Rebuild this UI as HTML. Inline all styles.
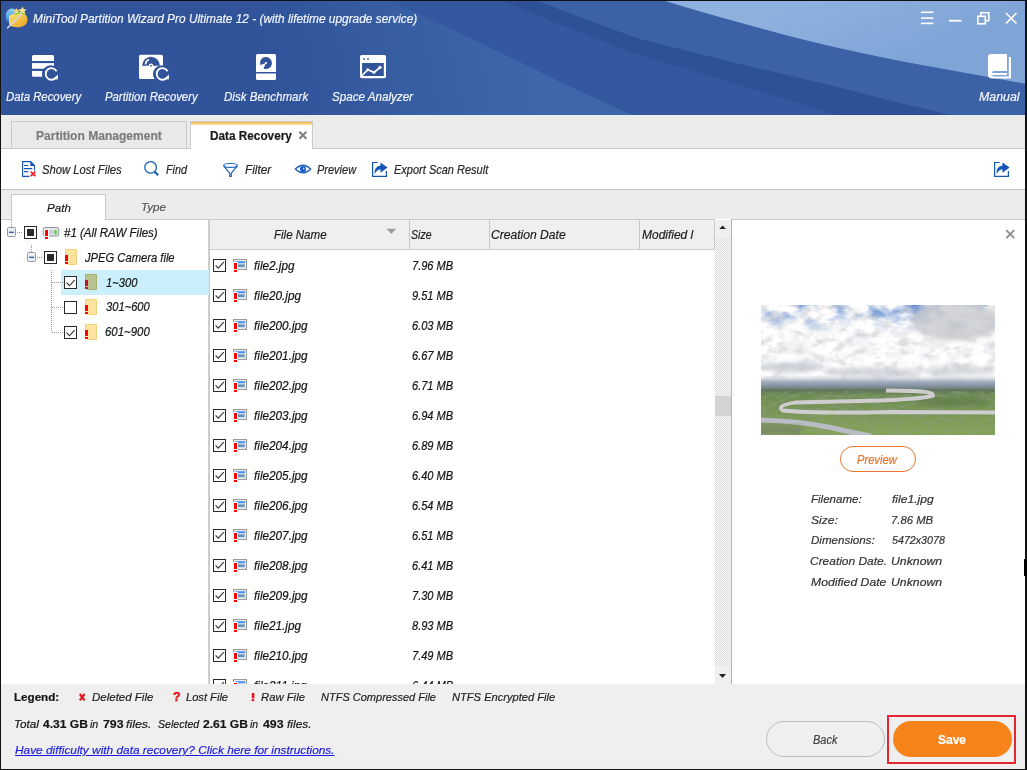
<!DOCTYPE html>
<html><head><meta charset="utf-8">
<style>
*{box-sizing:border-box;margin:0;padding:0}
html,body{width:1027px;height:770px;overflow:hidden;background:#f0f0f0}
body{font-family:"Liberation Sans",sans-serif;font-size:12px;color:#222;position:relative}
.abs{position:absolute}
.it{font-style:italic}
.w{color:#fff}
.hdr{left:0;top:0;width:1027px;height:115px}
.lbl{position:absolute;top:89px;font-style:italic;font-size:12.5px;color:#f4f6fb;white-space:nowrap}
.tb{position:absolute;top:162px;font-style:italic;font-size:12px;color:#333;white-space:nowrap}
.row{position:absolute;left:210px;width:505px;height:30px}
.cb{position:absolute;width:13px;height:13px;border:1px solid #333;background:#fff}
.txt{position:absolute;font-style:italic;white-space:nowrap;color:#222}
.t{position:absolute;white-space:nowrap;line-height:1;transform-origin:0 0;font-family:"Liberation Sans",sans-serif;-webkit-text-stroke:0.2px currentColor}
</style></head>
<body>
<!-- header -->
<svg class="abs hdr" width="1027" height="115" viewBox="0 0 1027 115">
 <defs>
  <linearGradient id="lg" gradientUnits="userSpaceOnUse" x1="800" y1="0" x2="840" y2="90">
   <stop offset="0" stop-color="#8eb1de"/><stop offset="1" stop-color="#7fa5d7"/>
  </linearGradient>
  <linearGradient id="ga" gradientUnits="userSpaceOnUse" x1="270" y1="70" x2="520" y2="20">
   <stop offset="0" stop-color="#30539a"/><stop offset="1" stop-color="#3e67ab"/>
  </linearGradient>
 </defs>
 <rect width="1027" height="115" fill="url(#ga)"/>
 <path d="M389 0 Q480 42 560 82 L632 115 L1027 115 L1027 0 Z" fill="#3358a0"/>
 <path d="M501 0 Q570 30 640 55 Q690 70 740 85 L837 115 L1027 115 L1027 0 Z" fill="#2e5096"/>
 <path d="M536 0 Q590 22 640 39 Q690 52 740 64 Q820 82 900 103 L950 115 L1027 115 L1027 0 Z" fill="#3b61a6"/>
 <path d="M662 0 Q700 12 767 30 Q820 45 900 61 Q960 72 1027 84 L1027 0 Z" fill="url(#lg)"/>
 <rect x="0" y="0" width="1027" height="1" fill="#111"/>
 <rect x="0" y="0" width="1" height="115" fill="#111"/>
 <rect x="1025" y="0" width="2" height="115" fill="#111"/>
</svg>
<!-- logo -->
<svg class="abs" style="left:2px;top:4px" width="30" height="28" viewBox="2 4 30 28">
 <defs>
  <linearGradient id="lgb" x1="0" y1="0" x2="0" y2="1"><stop offset="0" stop-color="#8fd0f2"/><stop offset="1" stop-color="#2a86dc"/></linearGradient>
  <linearGradient id="lgy" x1="0" y1="0" x2="1" y2="1"><stop offset="0" stop-color="#fde27a"/><stop offset="1" stop-color="#eaa21a"/></linearGradient>
 </defs>
 <ellipse cx="12.2" cy="15.8" rx="6.6" ry="7.2" fill="url(#lgb)"/>
 <path d="M9 16 Q14 12.5 22 12.5 Q27.5 14 27.5 20 Q27 26.5 19 27.2 Q11 27.5 9 24Z" fill="url(#lgy)"/>
 <path d="M15 14 Q19 12 25 13.5" stroke="#5fd04a" stroke-width="2" fill="none"/>
 <path d="M22.4 6.4 l1.4 2.6 2.8 .4 -2 1.9 .5 2.8 -2.7-1.4 -2.6 1.4 .5-2.8 -2-1.9 2.8-.4z" fill="#f6dc8c"/>
 <path d="M16.5 8 l1.1 2 2.2 .3 -1.6 1.5 .4 2.2 -2.1-1.1 -2.1 1.1 .4-2.2 -1.6-1.5 2.2-.3z" fill="#f3d47e"/>
 <path d="M7.2 28.2 L21.5 14.3" stroke="#d9d9de" stroke-width="1.6"/>
</svg>
<!-- window controls -->
<svg class="abs" style="left:915px;top:8px" width="108" height="22" viewBox="915 8 108 22">
 <g fill="#fff">
  <rect x="921" y="11.5" width="12.5" height="1.6"/>
  <rect x="921" y="17.3" width="12.5" height="1.6"/>
  <rect x="921" y="22.6" width="12.5" height="1.6"/>
  <rect x="949" y="19.8" width="12.5" height="1.8"/>
 </g>
 <g fill="none" stroke="#fff" stroke-width="1.6">
  <rect x="977.8" y="16.3" width="7.5" height="7.5"/>
  <path d="M980.8 16.3 V12.8 H988.8 V20.8 H985.3"/>
  <path d="M1006 13 L1016.5 23.5 M1016.5 13 L1006 23.5"/>
 </g>
</svg>
<!-- toolbar icons -->
<svg class="abs" style="left:0;top:45px" width="1027" height="45" viewBox="0 45 1027 45">
 <defs>
  <mask id="m1"><rect x="0" y="45" width="1027" height="45" fill="#fff"/><circle cx="50.7" cy="74.1" r="8.8" fill="#000"/></mask>
  <mask id="m2"><rect x="0" y="45" width="1027" height="45" fill="#fff"/><circle cx="161.7" cy="74.1" r="8.8" fill="#000"/></mask>
 </defs>
 <g fill="#fff">
  <g mask="url(#m1)">
   <path d="M33.5 55 H52.5 Q54 55 54 56.5 V61 H32 V56.5 Q32 55 33.5 55Z"/>
   <rect x="32" y="63.1" width="22" height="5.6"/>
   <path d="M32 71 H43 V76.8 H33.5 Q32 76.8 32 75.3Z"/>
  </g>
  <g mask="url(#m2)">
   <rect x="139" y="54.8" width="24" height="24.3" rx="1.6"/>
  </g>
  <path d="M257.5 54 H274.5 Q276 54 276 55.5 V72 H256 V55.5 Q256 54 257.5 54Z"/>
  <path d="M256 73.5 H276 V78.5 Q276 80 274.5 80 H257.5 Q256 80 256 78.5Z"/>
  <rect x="360" y="55" width="26" height="23.2" rx="1.6"/>
  <path d="M990.5 54 H1007 V71 H994 Q992 71 992 73 V74.5 Q992 76.6 994 76.6 H1011 V78.6 H992 Q988 78.6 988 74.6 V56.5 Q988 54 990.5 54Z"/>
  <rect x="1008.8" y="57" width="2.2" height="21"/>
  <rect x="992" y="73" width="15" height="2"/>
 </g>
 <!-- partition disk -->
 <path d="M142.1 65.7 A8.9 8.9 0 0 1 159.9 65.7 Z" fill="#30539a"/>
 <path d="M145.5 64.3 A5.8 5.8 0 0 1 149 59.6" stroke="#fff" stroke-width="1.6" fill="none"/>
 <circle cx="151" cy="65.7" r="2.3" fill="#fff"/>
 <circle cx="151" cy="65.7" r="0.9" fill="#30539a"/>
 <!-- refresh arrows -->
 <g fill="none" stroke="#fff" stroke-width="1.9">
  <path d="M56.6 71.2 A5.8 5.8 0 1 0 56.2 77.4"/>
  <path d="M167.6 71.2 A5.8 5.8 0 1 0 167.2 77.4"/>
 </g>
 <path d="M58 74.6 L57.8 79.6 L53.2 78.8Z" fill="#fff"/>
 <path d="M169 74.6 L168.8 79.6 L164.2 78.8Z" fill="#fff"/>
 <!-- disk bench platter -->
 <path d="M266 63 L260.36 65.05 A6 6 0 1 1 263.56 68.48 Z" fill="#30539a"/>
 <rect x="265.1" y="62.1" width="1.8" height="1.8" fill="#fff"/>
 <!-- space analyzer -->
 <rect x="362.1" y="63" width="21.7" height="13" fill="#30539a"/>
 <rect x="363.3" y="58.2" width="1.6" height="1.6" fill="#30539a"/>
 <rect x="367.2" y="58.2" width="1.6" height="1.6" fill="#30539a"/>
 <polyline points="362,75.5 367.8,69.8 374,72.4 380,67.5" fill="none" stroke="#fff" stroke-width="1.7"/>
 <circle cx="367.8" cy="69.6" r="1.4" fill="#fff"/>
 <circle cx="374" cy="72.4" r="1.4" fill="#fff"/>
 <circle cx="380" cy="67.5" r="1.7" fill="#fff"/>
</svg>
<!-- tab bar -->
<div class="abs" style="left:0;top:115px;width:1027px;height:34px;background:#ececec"></div>
<div class="abs" style="left:11px;top:121px;width:176px;height:28px;background:#e9e9e9;border:1px solid #c9c9c9;border-bottom:none"></div>
<div class="abs" style="left:190px;top:121px;width:123px;height:29px;background:#fff;border:1px solid #c9c9c9;border-bottom:none"></div>
<div class="abs" style="left:191px;top:122px;width:121px;height:3px;background:linear-gradient(#f2b84a,#fbe3a6)"></div>
<svg class="abs" style="left:297px;top:129px" width="12" height="12" viewBox="0 0 12 12"><path d="M2.4 2.7 L9.4 9.7 M9.4 2.7 L2.4 9.7" stroke="#808080" stroke-width="2.1"/></svg>
<!-- toolbar -->
<div class="abs" style="left:0;top:148px;width:190px;height:1px;background:#c9c9c9"></div>
<div class="abs" style="left:313px;top:148px;width:714px;height:1px;background:#c9c9c9"></div>
<div class="abs" style="left:0;top:149px;width:1027px;height:40px;background:#fff"></div>
<div class="abs" style="left:191px;top:148px;width:121px;height:2px;background:#fff"></div>
<div class="abs" style="left:0;top:189px;width:1027px;height:1px;background:#c4c4c4"></div>
<svg class="abs" style="left:0;top:155px" width="1027" height="26" viewBox="0 155 1027 26">
 <g fill="none" stroke="#1255b5" stroke-width="1.1">
  <path d="M29.5 176.4 H22.6 V161.6 H30.7 L34.5 165.4 V170.5"/>
  <path d="M24 165.5 H28.2 M24 168.6 H32.2 M24 171.6 H28.2" stroke-width="1.2"/>
 </g>
 <path d="M30.4 161.6 L34.8 166 H30.4Z" fill="#1255b5"/>
 <path d="M30.8 171.6 L35.4 176.2 M35.4 171.6 L30.8 176.2" stroke="#e3202b" stroke-width="1.7"/>
 <circle cx="150.6" cy="167.4" r="5.8" fill="none" stroke="#1d62c0" stroke-width="1.3"/>
 <path d="M154.6 171.6 L158.2 175.2" stroke="#1d62c0" stroke-width="2.2"/>
 <g fill="none" stroke="#1d62c0" stroke-width="1.2">
  <ellipse cx="230.5" cy="165.4" rx="6.8" ry="1.9"/>
  <path d="M223.8 166 L229.7 173.2 V176.3 H231.3 V173.2 L237.2 166"/>
 </g>
 <path d="M295.3 169 Q303 161.5 310.7 169 Q303 176.5 295.3 169Z" fill="none" stroke="#1d62c0" stroke-width="1.2"/>
 <circle cx="303" cy="169" r="3.1" fill="#1d62c0"/>
 <path d="M303.2 167.4 L304.8 168.6 L303.2 169.6Z" fill="#fff"/>
 <path d="M377.6 162.5 H372.6 V176.3 H386.4 V171" fill="none" stroke="#1555b5" stroke-width="1.2"/>
 <path d="M380.5 162.5 L387.6 167.6 L380.5 172.7 V169.3 Q376.5 169.6 374.8 174.3 Q373.4 166.8 380.5 165.4 Z" fill="#1555b5"/>
 <path d="M999.6 162.5 H994.6 V176.3 H1008.4 V171" fill="none" stroke="#1555b5" stroke-width="1.2"/>
 <path d="M1002.5 162.5 L1009.6 167.6 L1002.5 172.7 V169.3 Q998.5 169.6 996.8 174.3 Q995.4 166.8 1002.5 165.4 Z" fill="#1555b5"/>
</svg>
<!-- path/type tabs area -->
<div class="abs" style="left:0;top:190px;width:1027px;height:30px;background:#ececec"></div>
<div class="abs" style="left:11px;top:194px;width:95px;height:27px;background:#fff;border:1px solid #c9c9c9;border-bottom:none"></div>
<div class="abs" style="left:0;top:219px;width:11px;height:1px;background:#c9c9c9"></div>
<div class="abs" style="left:106px;top:219px;width:104px;height:1px;background:#c9c9c9"></div>
<!-- tree panel -->
<div class="abs" style="left:0;top:220px;width:209px;height:464px;background:#fff"></div>
<div class="abs" style="left:208px;top:219px;width:1px;height:465px;background:#d0d0d0"></div>
<div class="abs" style="left:61px;top:270px;width:148px;height:25px;background:#ccf0fb"></div>
<svg class="abs" style="left:0;top:220px" width="209" height="130" viewBox="0 220 209 130">
 <g stroke="#9a9a9a" stroke-width="1" stroke-dasharray="1 1" fill="none">
  <path d="M11.5 200 V227"/>
  <path d="M17 232.5 H22"/>
  <path d="M31.5 245 V252"/>
  <path d="M37 257.5 H42"/>
  <path d="M51.5 270 V332.5"/>
  <path d="M52 282.5 H63 M52 307.5 H63 M52 332.5 H63"/>
 </g>
 <rect x="7.5" y="227.5" width="8" height="9" rx="1" fill="#eef0f3" stroke="#8d9ab0"/>
 <rect x="9" y="231.6" width="5" height="1.4" fill="#3a64b8"/>
 <rect x="27.5" y="252.5" width="8" height="9" rx="1" fill="#eef0f3" stroke="#8d9ab0"/>
 <rect x="29" y="256.6" width="5" height="1.4" fill="#3a64b8"/>
 <rect x="24.5" y="226.5" width="12" height="12" fill="#fff" stroke="#2a2a2a"/>
 <rect x="27" y="229" width="7" height="7" fill="#2a2a2a"/>
 <rect x="44.5" y="251.5" width="12" height="12" fill="#fff" stroke="#2a2a2a"/>
 <rect x="47" y="254" width="7" height="7" fill="#2a2a2a"/>
 <rect x="64.5" y="276.5" width="12" height="12" fill="#fff" stroke="#2a2a2a"/>
 <path d="M66.6 282.6 L69.4 285.8 L74.6 280.2" fill="none" stroke="#2a2a2a" stroke-width="1.1"/>
 <rect x="64.5" y="301.5" width="12" height="12" fill="#fff" stroke="#2a2a2a"/>
 <rect x="64.5" y="326.5" width="12" height="12" fill="#fff" stroke="#2a2a2a"/>
 <path d="M66.6 332.6 L69.4 335.8 L74.6 330.2" fill="none" stroke="#2a2a2a" stroke-width="1.1"/>
 <!-- drive -->
 <rect x="43.2" y="227.5" width="15.6" height="8.5" rx="2" fill="#e4e6ea" stroke="#8c929c"/>
 <rect x="48" y="230" width="6" height="4" fill="#c8d0dc"/>
 <rect x="54.5" y="230" width="2.2" height="4.5" fill="#4cd23c"/>
 <rect x="44" y="229" width="5" height="11" fill="#fff"/><rect x="45" y="230" width="3" height="6" fill="#f00"/><rect x="45" y="237" width="3" height="2" fill="#f00"/>
 <!-- folders -->
 <path d="M65.5 249.5 H76.5 V264.5 H67.5 V262.5 H65.5Z" fill="#fde3a0" stroke="#f2d27c"/>
 <rect x="65" y="255" width="3" height="6" fill="#f00"/><rect x="65" y="262" width="3" height="2" fill="#f00"/>
 <path d="M85.5 274.5 H96.5 V289.5 H87.5 V287.5 H85.5Z" fill="#b9c391" stroke="#a7b071"/>
 <rect x="85" y="280" width="3" height="6" fill="#c8102e"/><rect x="85" y="287" width="3" height="2" fill="#c8102e"/>
 <path d="M85.5 299.5 H96.5 V314.5 H87.5 V312.5 H85.5Z" fill="#fde3a0" stroke="#f2d27c"/>
 <rect x="85" y="305" width="3" height="6" fill="#f00"/><rect x="85" y="312" width="3" height="2" fill="#f00"/>
 <path d="M85.5 324.5 H96.5 V339.5 H87.5 V337.5 H85.5Z" fill="#fde3a0" stroke="#f2d27c"/>
 <rect x="85" y="330" width="3" height="6" fill="#f00"/><rect x="85" y="337" width="3" height="2" fill="#f00"/>
</svg>
<!-- file list -->
<div class="abs" style="left:209px;top:219px;width:523px;height:465px;background:#fff"></div>
<div class="abs" style="left:209px;top:219px;width:1px;height:465px;background:#c9c9c9"></div>
<div class="abs" style="left:210px;top:219px;width:505px;height:31px;background:#efefef;border-top:1px solid #c9c9c9;border-bottom:1px solid #c9c9c9"></div>
<div class="abs" style="left:409px;top:220px;width:1px;height:29px;background:#c9c9c9"></div>
<div class="abs" style="left:489px;top:220px;width:1px;height:29px;background:#c9c9c9"></div>
<div class="abs" style="left:639px;top:220px;width:1px;height:29px;background:#c9c9c9"></div>
<div class="abs" style="left:714px;top:220px;width:1px;height:29px;background:#c9c9c9"></div>
<svg class="abs" style="left:386px;top:228px" width="11" height="7" viewBox="0 0 11 7"><path d="M0.5 0.8 H10.2 L5.35 6Z" fill="#9c9c9c"/></svg>
<!-- scrollbar -->
<div class="abs" style="left:715px;top:220px;width:16px;height:464px;background:repeating-conic-gradient(#d9d9d9 0 25%,#fcfcfc 0 50%) 0 0/2px 2px"></div>
<div class="abs" style="left:715px;top:220px;width:16px;height:18px;background:#efefef"></div>
<div class="abs" style="left:715px;top:666px;width:16px;height:18px;background:#efefef"></div>
<div class="abs" style="left:715px;top:396px;width:16px;height:20px;background:#d3d3d3"></div>
<div class="abs" style="left:731px;top:219px;width:1px;height:465px;background:#b4b4b4"></div>
<svg class="abs" style="left:715px;top:220px" width="16" height="464" viewBox="0 0 16 464"><path d="M4.2 9 H11 L7.6 5.6Z" fill="#222"/><path d="M4 454 H11 L7.5 458Z" fill="#222"/></svg>
<!-- preview panel -->
<div class="abs" style="left:732px;top:219px;width:293px;height:465px;background:#fff;border-top:1px solid #c9c9c9"></div>
<svg class="abs" style="left:1003px;top:227px" width="14" height="14" viewBox="1003 227 14 14"><path d="M1006.3 230.2 L1014.2 238.1 M1014.2 230.2 L1006.3 238.1" stroke="#8c8c8c" stroke-width="1.8"/></svg>
<svg class="abs" style="left:761px;top:305px" width="234" height="130" viewBox="0 0 234 130">
 <defs>
  <linearGradient id="grd" x1="0" y1="0" x2="0" y2="1"><stop offset="0" stop-color="#6e8c52"/><stop offset="1" stop-color="#86a457"/></linearGradient>
  <linearGradient id="skyfade" x1="0" y1="0" x2="0" y2="1"><stop offset="0" stop-color="#000"/><stop offset="0.35" stop-color="#fff"/><stop offset="1" stop-color="#fff"/></linearGradient>
  <filter id="cl" x="0" y="0" width="234" height="78" filterUnits="userSpaceOnUse">
   <feTurbulence type="fractalNoise" baseFrequency="0.035 0.06" numOctaves="4" seed="7" result="n"/>
   <feColorMatrix in="n" type="matrix" values="0 0 0 0 1  0 0 0 0 1  0 0 0 0 1  4 0 0 0 -1.3"/>
  </filter>
  <filter id="sh" x="0" y="0" width="234" height="76" filterUnits="userSpaceOnUse">
   <feTurbulence type="fractalNoise" baseFrequency="0.08 0.12" numOctaves="3" seed="11" result="n"/>
   <feColorMatrix in="n" type="matrix" values="0 0 0 0 0.55  0 0 0 0 0.56  0 0 0 0 0.6  3 0 0 0 -1.35"/>
  </filter>
  <filter id="bl" x="-20%" y="-20%" width="140%" height="140%"><feGaussianBlur stdDeviation="2.2"/></filter>
  <filter id="bl2" x="-5%" y="-50%" width="110%" height="200%"><feGaussianBlur stdDeviation="0.7"/></filter>
  <mask id="skm"><rect width="234" height="80" fill="url(#skyfade)"/></mask>
  <clipPath id="pc"><rect width="234" height="130"/></clipPath>
 </defs>
 <g clip-path="url(#pc)">
 <rect width="234" height="80" fill="#5b86cf"/>
 <rect width="234" height="80" fill="#f2f3f5" mask="url(#skm)"/>
 <rect width="234" height="80" filter="url(#cl)"/>
 <g filter="url(#bl)">
  <ellipse cx="195" cy="16" rx="45" ry="20" fill="#c9cacd" opacity="0.8"/>
  <ellipse cx="30" cy="62" rx="32" ry="5" fill="#cfd3da"/>
  <ellipse cx="110" cy="67" rx="46" ry="5" fill="#d5d8de"/>
  <ellipse cx="196" cy="66" rx="36" ry="5" fill="#d9dce1"/>
 </g>
 <rect width="234" height="78" filter="url(#sh)" opacity="0.55"/>
 <defs>
  <linearGradient id="hz" x1="0" y1="0" x2="0" y2="1"><stop offset="0" stop-color="#d0d4dc" stop-opacity="0"/><stop offset="0.33" stop-color="#a3aec0"/><stop offset="0.55" stop-color="#8592a0"/><stop offset="0.78" stop-color="#5f7359"/><stop offset="1" stop-color="#6d8b51"/></linearGradient>
  <filter id="gn" x="0" y="86" width="234" height="44" filterUnits="userSpaceOnUse">
   <feTurbulence type="fractalNoise" baseFrequency="0.12 0.3" numOctaves="3" seed="5" result="n"/>
   <feColorMatrix in="n" type="matrix" values="0 0 0 0 0.25  0 0 0 0 0.33  0 0 0 0 0.2  3 0 0 0 -1.2"/>
  </filter>
 </defs>
 <rect x="0" y="70" width="234" height="20" fill="url(#hz)"/>
 <rect x="0" y="90" width="234" height="40" fill="url(#grd)"/>
 <rect x="0" y="84" width="234" height="46" filter="url(#gn)" opacity="0.6"/>
 <ellipse cx="190" cy="97" rx="40" ry="4" fill="#5c7446" opacity="0.6" filter="url(#bl)"/>
 <g fill="none" filter="url(#bl2)">
  <path d="M236 107.5 L130 107 Q50 108.5 22 105.5 Q14 101 34 97.5 L120 95.5 Q166 93.5 172 90.5 Q173 86.5 150 86 L125 85.5" stroke="#cfcdd0" stroke-width="3.8"/>
  <path d="M-2 115 Q40 116 72 123 Q92 128 110 131" stroke="#b8bcc4" stroke-width="5"/>
 </g>
 <rect x="0" y="120" width="40" height="10" fill="#6d7a66" opacity="0.5" filter="url(#bl)"/>
 </g>
</svg>

<div class="abs" style="left:840px;top:446px;width:76px;height:26px;border:1px solid #e8762c;border-radius:13px"></div>
<!-- bottom -->
<div class="abs" style="left:0;top:684px;width:1027px;height:86px;background:#efefef"></div>
<svg class="abs" style="left:0;top:684px" width="300" height="30" viewBox="0 684 300 30">
 <path d="M79.8 694 L84.6 700.4 M84.6 694 L79.8 700.4" stroke="#e5141e" stroke-width="2.1"/>
 <text x="172.9" y="701.3" font-family="Liberation Sans" font-weight="bold" font-size="12.5" fill="#e5141e" stroke="#e5141e" stroke-width="0.5">?</text>
 <rect x="251.8" y="693" width="2.6" height="5.4" fill="#e5141e"/><rect x="251.6" y="699.2" width="2.6" height="2" fill="#e5141e"/>
</svg>
<div class="abs" style="left:766px;top:721px;width:119px;height:36px;border:1px solid #bdbdbd;border-radius:18px;background:#efefef"></div>
<div class="abs" style="left:893px;top:721px;width:119px;height:36px;border-radius:18px;background:#f7841b"></div>
<div class="abs" style="left:887px;top:715px;width:129px;height:49px;border:2px solid #e42731"></div>
<div class="abs" style="left:1024px;top:559px;width:3px;height:17px;background:#000;z-index:51"></div>

<div class="abs" style="left:210px;top:250px;width:505px;height:434px;overflow:hidden">
<div class="t" style="left:43.90px;top:10.00px;font-size:12.35px;font-style:italic;color:#121212;transform:scaleX(0.952);">file2.jpg</div>
<div class="t" style="left:202.30px;top:10.00px;font-size:12.35px;font-style:italic;color:#121212;transform:scaleX(0.896);">7.96 MB</div>
<svg class="abs" style="left:3px;top:9px" width="34" height="15" viewBox="213 259 34 15"><rect x="213.5" y="259.5" width="12" height="12" fill="#fff" stroke="#2a2a2a"/><path d="M215.6 265.4 L218.2 268.2 L223.8 262.2" fill="none" stroke="#333" stroke-width="1.1"/><rect x="233.6" y="259.6" width="12.8" height="9.8" fill="#fff" stroke="#9a9a9a" stroke-width="1.2"/><rect x="235.5" y="261.2" width="9.5" height="1.8" fill="#4a8ff0"/><rect x="235.5" y="263" width="9.5" height="4.6" fill="#bcd6ef"/><rect x="237.5" y="264.5" width="7" height="2.6" fill="#6b93b3"/><rect x="233" y="262" width="5" height="11" fill="#fff"/><rect x="234" y="263" width="3" height="6" fill="#f00"/><rect x="234" y="270" width="3" height="2" fill="#f00"/></svg>
<div class="t" style="left:43.90px;top:40.00px;font-size:12.35px;font-style:italic;color:#121212;transform:scaleX(0.952);">file20.jpg</div>
<div class="t" style="left:202.30px;top:40.00px;font-size:12.35px;font-style:italic;color:#121212;transform:scaleX(0.896);">9.51 MB</div>
<svg class="abs" style="left:3px;top:39px" width="34" height="15" viewBox="213 259 34 15"><rect x="213.5" y="259.5" width="12" height="12" fill="#fff" stroke="#2a2a2a"/><path d="M215.6 265.4 L218.2 268.2 L223.8 262.2" fill="none" stroke="#333" stroke-width="1.1"/><rect x="233.6" y="259.6" width="12.8" height="9.8" fill="#fff" stroke="#9a9a9a" stroke-width="1.2"/><rect x="235.5" y="261.2" width="9.5" height="1.8" fill="#4a8ff0"/><rect x="235.5" y="263" width="9.5" height="4.6" fill="#bcd6ef"/><rect x="237.5" y="264.5" width="7" height="2.6" fill="#6b93b3"/><rect x="233" y="262" width="5" height="11" fill="#fff"/><rect x="234" y="263" width="3" height="6" fill="#f00"/><rect x="234" y="270" width="3" height="2" fill="#f00"/></svg>
<div class="t" style="left:43.90px;top:70.00px;font-size:12.35px;font-style:italic;color:#121212;transform:scaleX(0.952);">file200.jpg</div>
<div class="t" style="left:202.30px;top:70.00px;font-size:12.35px;font-style:italic;color:#121212;transform:scaleX(0.896);">6.03 MB</div>
<svg class="abs" style="left:3px;top:69px" width="34" height="15" viewBox="213 259 34 15"><rect x="213.5" y="259.5" width="12" height="12" fill="#fff" stroke="#2a2a2a"/><path d="M215.6 265.4 L218.2 268.2 L223.8 262.2" fill="none" stroke="#333" stroke-width="1.1"/><rect x="233.6" y="259.6" width="12.8" height="9.8" fill="#fff" stroke="#9a9a9a" stroke-width="1.2"/><rect x="235.5" y="261.2" width="9.5" height="1.8" fill="#4a8ff0"/><rect x="235.5" y="263" width="9.5" height="4.6" fill="#bcd6ef"/><rect x="237.5" y="264.5" width="7" height="2.6" fill="#6b93b3"/><rect x="233" y="262" width="5" height="11" fill="#fff"/><rect x="234" y="263" width="3" height="6" fill="#f00"/><rect x="234" y="270" width="3" height="2" fill="#f00"/></svg>
<div class="t" style="left:43.90px;top:100.00px;font-size:12.35px;font-style:italic;color:#121212;transform:scaleX(0.952);">file201.jpg</div>
<div class="t" style="left:202.30px;top:100.00px;font-size:12.35px;font-style:italic;color:#121212;transform:scaleX(0.896);">6.67 MB</div>
<svg class="abs" style="left:3px;top:99px" width="34" height="15" viewBox="213 259 34 15"><rect x="213.5" y="259.5" width="12" height="12" fill="#fff" stroke="#2a2a2a"/><path d="M215.6 265.4 L218.2 268.2 L223.8 262.2" fill="none" stroke="#333" stroke-width="1.1"/><rect x="233.6" y="259.6" width="12.8" height="9.8" fill="#fff" stroke="#9a9a9a" stroke-width="1.2"/><rect x="235.5" y="261.2" width="9.5" height="1.8" fill="#4a8ff0"/><rect x="235.5" y="263" width="9.5" height="4.6" fill="#bcd6ef"/><rect x="237.5" y="264.5" width="7" height="2.6" fill="#6b93b3"/><rect x="233" y="262" width="5" height="11" fill="#fff"/><rect x="234" y="263" width="3" height="6" fill="#f00"/><rect x="234" y="270" width="3" height="2" fill="#f00"/></svg>
<div class="t" style="left:43.90px;top:130.00px;font-size:12.35px;font-style:italic;color:#121212;transform:scaleX(0.952);">file202.jpg</div>
<div class="t" style="left:202.30px;top:130.00px;font-size:12.35px;font-style:italic;color:#121212;transform:scaleX(0.896);">6.71 MB</div>
<svg class="abs" style="left:3px;top:129px" width="34" height="15" viewBox="213 259 34 15"><rect x="213.5" y="259.5" width="12" height="12" fill="#fff" stroke="#2a2a2a"/><path d="M215.6 265.4 L218.2 268.2 L223.8 262.2" fill="none" stroke="#333" stroke-width="1.1"/><rect x="233.6" y="259.6" width="12.8" height="9.8" fill="#fff" stroke="#9a9a9a" stroke-width="1.2"/><rect x="235.5" y="261.2" width="9.5" height="1.8" fill="#4a8ff0"/><rect x="235.5" y="263" width="9.5" height="4.6" fill="#bcd6ef"/><rect x="237.5" y="264.5" width="7" height="2.6" fill="#6b93b3"/><rect x="233" y="262" width="5" height="11" fill="#fff"/><rect x="234" y="263" width="3" height="6" fill="#f00"/><rect x="234" y="270" width="3" height="2" fill="#f00"/></svg>
<div class="t" style="left:43.90px;top:160.00px;font-size:12.35px;font-style:italic;color:#121212;transform:scaleX(0.952);">file203.jpg</div>
<div class="t" style="left:202.30px;top:160.00px;font-size:12.35px;font-style:italic;color:#121212;transform:scaleX(0.896);">6.94 MB</div>
<svg class="abs" style="left:3px;top:159px" width="34" height="15" viewBox="213 259 34 15"><rect x="213.5" y="259.5" width="12" height="12" fill="#fff" stroke="#2a2a2a"/><path d="M215.6 265.4 L218.2 268.2 L223.8 262.2" fill="none" stroke="#333" stroke-width="1.1"/><rect x="233.6" y="259.6" width="12.8" height="9.8" fill="#fff" stroke="#9a9a9a" stroke-width="1.2"/><rect x="235.5" y="261.2" width="9.5" height="1.8" fill="#4a8ff0"/><rect x="235.5" y="263" width="9.5" height="4.6" fill="#bcd6ef"/><rect x="237.5" y="264.5" width="7" height="2.6" fill="#6b93b3"/><rect x="233" y="262" width="5" height="11" fill="#fff"/><rect x="234" y="263" width="3" height="6" fill="#f00"/><rect x="234" y="270" width="3" height="2" fill="#f00"/></svg>
<div class="t" style="left:43.90px;top:190.00px;font-size:12.35px;font-style:italic;color:#121212;transform:scaleX(0.952);">file204.jpg</div>
<div class="t" style="left:202.30px;top:190.00px;font-size:12.35px;font-style:italic;color:#121212;transform:scaleX(0.896);">6.89 MB</div>
<svg class="abs" style="left:3px;top:189px" width="34" height="15" viewBox="213 259 34 15"><rect x="213.5" y="259.5" width="12" height="12" fill="#fff" stroke="#2a2a2a"/><path d="M215.6 265.4 L218.2 268.2 L223.8 262.2" fill="none" stroke="#333" stroke-width="1.1"/><rect x="233.6" y="259.6" width="12.8" height="9.8" fill="#fff" stroke="#9a9a9a" stroke-width="1.2"/><rect x="235.5" y="261.2" width="9.5" height="1.8" fill="#4a8ff0"/><rect x="235.5" y="263" width="9.5" height="4.6" fill="#bcd6ef"/><rect x="237.5" y="264.5" width="7" height="2.6" fill="#6b93b3"/><rect x="233" y="262" width="5" height="11" fill="#fff"/><rect x="234" y="263" width="3" height="6" fill="#f00"/><rect x="234" y="270" width="3" height="2" fill="#f00"/></svg>
<div class="t" style="left:43.90px;top:220.00px;font-size:12.35px;font-style:italic;color:#121212;transform:scaleX(0.952);">file205.jpg</div>
<div class="t" style="left:202.30px;top:220.00px;font-size:12.35px;font-style:italic;color:#121212;transform:scaleX(0.896);">6.40 MB</div>
<svg class="abs" style="left:3px;top:219px" width="34" height="15" viewBox="213 259 34 15"><rect x="213.5" y="259.5" width="12" height="12" fill="#fff" stroke="#2a2a2a"/><path d="M215.6 265.4 L218.2 268.2 L223.8 262.2" fill="none" stroke="#333" stroke-width="1.1"/><rect x="233.6" y="259.6" width="12.8" height="9.8" fill="#fff" stroke="#9a9a9a" stroke-width="1.2"/><rect x="235.5" y="261.2" width="9.5" height="1.8" fill="#4a8ff0"/><rect x="235.5" y="263" width="9.5" height="4.6" fill="#bcd6ef"/><rect x="237.5" y="264.5" width="7" height="2.6" fill="#6b93b3"/><rect x="233" y="262" width="5" height="11" fill="#fff"/><rect x="234" y="263" width="3" height="6" fill="#f00"/><rect x="234" y="270" width="3" height="2" fill="#f00"/></svg>
<div class="t" style="left:43.90px;top:250.00px;font-size:12.35px;font-style:italic;color:#121212;transform:scaleX(0.952);">file206.jpg</div>
<div class="t" style="left:202.30px;top:250.00px;font-size:12.35px;font-style:italic;color:#121212;transform:scaleX(0.896);">6.54 MB</div>
<svg class="abs" style="left:3px;top:249px" width="34" height="15" viewBox="213 259 34 15"><rect x="213.5" y="259.5" width="12" height="12" fill="#fff" stroke="#2a2a2a"/><path d="M215.6 265.4 L218.2 268.2 L223.8 262.2" fill="none" stroke="#333" stroke-width="1.1"/><rect x="233.6" y="259.6" width="12.8" height="9.8" fill="#fff" stroke="#9a9a9a" stroke-width="1.2"/><rect x="235.5" y="261.2" width="9.5" height="1.8" fill="#4a8ff0"/><rect x="235.5" y="263" width="9.5" height="4.6" fill="#bcd6ef"/><rect x="237.5" y="264.5" width="7" height="2.6" fill="#6b93b3"/><rect x="233" y="262" width="5" height="11" fill="#fff"/><rect x="234" y="263" width="3" height="6" fill="#f00"/><rect x="234" y="270" width="3" height="2" fill="#f00"/></svg>
<div class="t" style="left:43.90px;top:280.00px;font-size:12.35px;font-style:italic;color:#121212;transform:scaleX(0.952);">file207.jpg</div>
<div class="t" style="left:202.30px;top:280.00px;font-size:12.35px;font-style:italic;color:#121212;transform:scaleX(0.896);">6.51 MB</div>
<svg class="abs" style="left:3px;top:279px" width="34" height="15" viewBox="213 259 34 15"><rect x="213.5" y="259.5" width="12" height="12" fill="#fff" stroke="#2a2a2a"/><path d="M215.6 265.4 L218.2 268.2 L223.8 262.2" fill="none" stroke="#333" stroke-width="1.1"/><rect x="233.6" y="259.6" width="12.8" height="9.8" fill="#fff" stroke="#9a9a9a" stroke-width="1.2"/><rect x="235.5" y="261.2" width="9.5" height="1.8" fill="#4a8ff0"/><rect x="235.5" y="263" width="9.5" height="4.6" fill="#bcd6ef"/><rect x="237.5" y="264.5" width="7" height="2.6" fill="#6b93b3"/><rect x="233" y="262" width="5" height="11" fill="#fff"/><rect x="234" y="263" width="3" height="6" fill="#f00"/><rect x="234" y="270" width="3" height="2" fill="#f00"/></svg>
<div class="t" style="left:43.90px;top:310.00px;font-size:12.35px;font-style:italic;color:#121212;transform:scaleX(0.952);">file208.jpg</div>
<div class="t" style="left:202.30px;top:310.00px;font-size:12.35px;font-style:italic;color:#121212;transform:scaleX(0.896);">6.41 MB</div>
<svg class="abs" style="left:3px;top:309px" width="34" height="15" viewBox="213 259 34 15"><rect x="213.5" y="259.5" width="12" height="12" fill="#fff" stroke="#2a2a2a"/><path d="M215.6 265.4 L218.2 268.2 L223.8 262.2" fill="none" stroke="#333" stroke-width="1.1"/><rect x="233.6" y="259.6" width="12.8" height="9.8" fill="#fff" stroke="#9a9a9a" stroke-width="1.2"/><rect x="235.5" y="261.2" width="9.5" height="1.8" fill="#4a8ff0"/><rect x="235.5" y="263" width="9.5" height="4.6" fill="#bcd6ef"/><rect x="237.5" y="264.5" width="7" height="2.6" fill="#6b93b3"/><rect x="233" y="262" width="5" height="11" fill="#fff"/><rect x="234" y="263" width="3" height="6" fill="#f00"/><rect x="234" y="270" width="3" height="2" fill="#f00"/></svg>
<div class="t" style="left:43.90px;top:340.00px;font-size:12.35px;font-style:italic;color:#121212;transform:scaleX(0.952);">file209.jpg</div>
<div class="t" style="left:202.30px;top:340.00px;font-size:12.35px;font-style:italic;color:#121212;transform:scaleX(0.896);">7.30 MB</div>
<svg class="abs" style="left:3px;top:339px" width="34" height="15" viewBox="213 259 34 15"><rect x="213.5" y="259.5" width="12" height="12" fill="#fff" stroke="#2a2a2a"/><path d="M215.6 265.4 L218.2 268.2 L223.8 262.2" fill="none" stroke="#333" stroke-width="1.1"/><rect x="233.6" y="259.6" width="12.8" height="9.8" fill="#fff" stroke="#9a9a9a" stroke-width="1.2"/><rect x="235.5" y="261.2" width="9.5" height="1.8" fill="#4a8ff0"/><rect x="235.5" y="263" width="9.5" height="4.6" fill="#bcd6ef"/><rect x="237.5" y="264.5" width="7" height="2.6" fill="#6b93b3"/><rect x="233" y="262" width="5" height="11" fill="#fff"/><rect x="234" y="263" width="3" height="6" fill="#f00"/><rect x="234" y="270" width="3" height="2" fill="#f00"/></svg>
<div class="t" style="left:43.90px;top:370.00px;font-size:12.35px;font-style:italic;color:#121212;transform:scaleX(0.952);">file21.jpg</div>
<div class="t" style="left:202.30px;top:370.00px;font-size:12.35px;font-style:italic;color:#121212;transform:scaleX(0.896);">8.93 MB</div>
<svg class="abs" style="left:3px;top:369px" width="34" height="15" viewBox="213 259 34 15"><rect x="213.5" y="259.5" width="12" height="12" fill="#fff" stroke="#2a2a2a"/><path d="M215.6 265.4 L218.2 268.2 L223.8 262.2" fill="none" stroke="#333" stroke-width="1.1"/><rect x="233.6" y="259.6" width="12.8" height="9.8" fill="#fff" stroke="#9a9a9a" stroke-width="1.2"/><rect x="235.5" y="261.2" width="9.5" height="1.8" fill="#4a8ff0"/><rect x="235.5" y="263" width="9.5" height="4.6" fill="#bcd6ef"/><rect x="237.5" y="264.5" width="7" height="2.6" fill="#6b93b3"/><rect x="233" y="262" width="5" height="11" fill="#fff"/><rect x="234" y="263" width="3" height="6" fill="#f00"/><rect x="234" y="270" width="3" height="2" fill="#f00"/></svg>
<div class="t" style="left:43.90px;top:400.00px;font-size:12.35px;font-style:italic;color:#121212;transform:scaleX(0.952);">file210.jpg</div>
<div class="t" style="left:202.30px;top:400.00px;font-size:12.35px;font-style:italic;color:#121212;transform:scaleX(0.896);">7.49 MB</div>
<svg class="abs" style="left:3px;top:399px" width="34" height="15" viewBox="213 259 34 15"><rect x="213.5" y="259.5" width="12" height="12" fill="#fff" stroke="#2a2a2a"/><path d="M215.6 265.4 L218.2 268.2 L223.8 262.2" fill="none" stroke="#333" stroke-width="1.1"/><rect x="233.6" y="259.6" width="12.8" height="9.8" fill="#fff" stroke="#9a9a9a" stroke-width="1.2"/><rect x="235.5" y="261.2" width="9.5" height="1.8" fill="#4a8ff0"/><rect x="235.5" y="263" width="9.5" height="4.6" fill="#bcd6ef"/><rect x="237.5" y="264.5" width="7" height="2.6" fill="#6b93b3"/><rect x="233" y="262" width="5" height="11" fill="#fff"/><rect x="234" y="263" width="3" height="6" fill="#f00"/><rect x="234" y="270" width="3" height="2" fill="#f00"/></svg>
<div class="t" style="left:43.90px;top:430.00px;font-size:12.35px;font-style:italic;color:#121212;transform:scaleX(0.952);">file211.jpg</div>
<div class="t" style="left:202.30px;top:430.00px;font-size:12.35px;font-style:italic;color:#121212;transform:scaleX(0.896);">6.44 MB</div>
<svg class="abs" style="left:3px;top:429px" width="34" height="15" viewBox="213 259 34 15"><rect x="213.5" y="259.5" width="12" height="12" fill="#fff" stroke="#2a2a2a"/><path d="M215.6 265.4 L218.2 268.2 L223.8 262.2" fill="none" stroke="#333" stroke-width="1.1"/><rect x="233.6" y="259.6" width="12.8" height="9.8" fill="#fff" stroke="#9a9a9a" stroke-width="1.2"/><rect x="235.5" y="261.2" width="9.5" height="1.8" fill="#4a8ff0"/><rect x="235.5" y="263" width="9.5" height="4.6" fill="#bcd6ef"/><rect x="237.5" y="264.5" width="7" height="2.6" fill="#6b93b3"/><rect x="233" y="262" width="5" height="11" fill="#fff"/><rect x="234" y="263" width="3" height="6" fill="#f00"/><rect x="234" y="270" width="3" height="2" fill="#f00"/></svg>
</div>
<div class="t" style="left:32.50px;top:13.00px;font-size:12.62px;font-style:italic;color:#f3f6fb;transform:scaleX(0.942);">MiniTool Partition Wizard Pro Ultimate 12 - (with lifetime upgrade service)</div>
<div class="t" style="left:5.70px;top:91.00px;font-size:12.62px;font-style:italic;color:#f3f6fb;transform:scaleX(0.901);">Data Recovery</div>
<div class="t" style="left:105.30px;top:91.00px;font-size:12.62px;font-style:italic;color:#f3f6fb;transform:scaleX(0.899);">Partition Recovery</div>
<div class="t" style="left:223.60px;top:91.00px;font-size:12.62px;font-style:italic;color:#f3f6fb;transform:scaleX(0.917);">Disk Benchmark</div>
<div class="t" style="left:332.28px;top:91.00px;font-size:12.62px;font-style:italic;color:#f3f6fb;transform:scaleX(0.922);">Space Analyzer</div>
<div class="t" style="left:979.00px;top:91.00px;font-size:12.07px;font-style:italic;color:#f3f6fb;transform:scaleX(1.025);">Manual</div>
<div class="t" style="left:35.59px;top:131.00px;font-size:11.93px;font-weight:bold;color:#7d7d7d;transform:scaleX(1.010);">Partition Management</div>
<div class="t" style="left:209.55px;top:130.00px;font-size:12.35px;font-weight:bold;color:#1a1a1a;transform:scaleX(0.954);">Data Recovery</div>
<div class="t" style="left:41.79px;top:164.00px;font-size:12.35px;font-style:italic;color:#262626;transform:scaleX(0.913);">Show Lost Files</div>
<div class="t" style="left:166.10px;top:164.00px;font-size:12.35px;font-style:italic;color:#262626;transform:scaleX(0.876);">Find</div>
<div class="t" style="left:245.10px;top:164.00px;font-size:12.35px;font-style:italic;color:#262626;transform:scaleX(0.957);">Filter</div>
<div class="t" style="left:317.00px;top:164.00px;font-size:12.35px;font-style:italic;color:#262626;transform:scaleX(0.891);">Preview</div>
<div class="t" style="left:394.10px;top:164.00px;font-size:12.35px;font-style:italic;color:#262626;transform:scaleX(0.892);">Export Scan Result</div>
<div class="t" style="left:46.70px;top:203.00px;font-size:11.80px;font-style:italic;color:#1a1a1a;transform:scaleX(0.983);">Path</div>
<div class="t" style="left:140.82px;top:202.00px;font-size:11.80px;font-style:italic;color:#555;transform:scaleX(0.983);">Type</div>
<div class="t" style="left:64.37px;top:227.00px;font-size:12.35px;font-style:italic;color:#151515;transform:scaleX(0.931);">#1 (All RAW Files)</div>
<div class="t" style="left:84.60px;top:252.00px;font-size:12.35px;font-style:italic;color:#151515;transform:scaleX(0.907);">JPEG Camera file</div>
<div class="t" style="left:106.00px;top:277.00px;font-size:12.07px;font-style:italic;color:#151515;transform:scaleX(0.926);">1~300</div>
<div class="t" style="left:106.00px;top:301.00px;font-size:12.07px;font-style:italic;color:#151515;transform:scaleX(0.926);">301~600</div>
<div class="t" style="left:105.05px;top:326.00px;font-size:12.07px;font-style:italic;color:#151515;transform:scaleX(0.946);">601~900</div>
<div class="t" style="left:274.20px;top:229.00px;font-size:12.21px;font-style:italic;color:#1e1e1e;transform:scaleX(0.945);">File Name</div>
<div class="t" style="left:411.13px;top:229.00px;font-size:12.21px;font-style:italic;color:#1e1e1e;transform:scaleX(0.865);">Size</div>
<div class="t" style="left:491.21px;top:229.00px;font-size:12.21px;font-style:italic;color:#1e1e1e;transform:scaleX(0.992);">Creation Date</div>
<div class="t" style="left:642.00px;top:229.00px;font-size:12.21px;font-style:italic;color:#1e1e1e;transform:scaleX(0.981);">Modified l</div>
<div class="t" style="left:857.00px;top:454.00px;font-size:12.07px;font-style:italic;color:#e8762c;transform:scaleX(0.925);">Preview</div>
<div class="t" style="left:811.20px;top:493.00px;font-size:11.66px;font-style:italic;color:#333;transform:scaleX(0.990);">Filename:</div>
<div class="t" style="left:891.80px;top:493.00px;font-size:11.66px;font-style:italic;color:#333;transform:scaleX(1.040);">file1.jpg</div>
<div class="t" style="left:811.20px;top:514.00px;font-size:11.66px;font-style:italic;color:#333;transform:scaleX(1.040);">Size:</div>
<div class="t" style="left:890.83px;top:514.00px;font-size:11.66px;font-style:italic;color:#333;transform:scaleX(0.971);">7.86 MB</div>
<div class="t" style="left:811.20px;top:534.00px;font-size:11.66px;font-style:italic;color:#333;transform:scaleX(0.994);">Dimensions:</div>
<div class="t" style="left:891.80px;top:534.00px;font-size:11.66px;font-style:italic;color:#333;transform:scaleX(0.916);">5472x3078</div>
<div class="t" style="left:810.18px;top:555.00px;font-size:11.66px;font-style:italic;color:#333;transform:scaleX(1.025);">Creation Date.</div>
<div class="t" style="left:890.75px;top:555.00px;font-size:11.66px;font-style:italic;color:#333;transform:scaleX(1.053);">Unknown</div>
<div class="t" style="left:811.20px;top:576.00px;font-size:11.66px;font-style:italic;color:#333;transform:scaleX(1.048);">Modified Date</div>
<div class="t" style="left:890.75px;top:576.00px;font-size:11.66px;font-style:italic;color:#333;transform:scaleX(1.053);">Unknown</div>
<div class="t" style="left:13.59px;top:692.00px;font-size:11.52px;font-weight:bold;color:#151515;transform:scaleX(1.009);">Legend:</div>
<div class="t" style="left:91.50px;top:692.00px;font-size:11.80px;font-style:italic;color:#1e1e1e;transform:scaleX(0.975);">Deleted File</div>
<div class="t" style="left:186.30px;top:692.00px;font-size:11.80px;font-style:italic;color:#1e1e1e;transform:scaleX(0.943);">Lost File</div>
<div class="t" style="left:260.80px;top:692.00px;font-size:11.80px;font-style:italic;color:#1e1e1e;transform:scaleX(0.957);">Raw File</div>
<div class="t" style="left:321.00px;top:692.00px;font-size:11.80px;font-style:italic;color:#1e1e1e;transform:scaleX(0.933);">NTFS Compressed File</div>
<div class="t" style="left:451.90px;top:692.00px;font-size:11.80px;font-style:italic;color:#1e1e1e;transform:scaleX(0.943);">NTFS Encrypted File</div>
<div class="t" style="left:13.81px;top:719.00px;font-size:11.80px;font-style:italic;color:#151515;transform:scaleX(0.992);">Total</div>
<div class="t" style="left:43.10px;top:719.00px;font-size:11.80px;font-weight:bold;color:#151515;transform:scaleX(1.023);">4.31 GB</div>
<div class="t" style="left:90.30px;top:719.00px;font-size:11.80px;font-style:italic;color:#151515;transform:scaleX(0.900);">in</div>
<div class="t" style="left:103.20px;top:719.00px;font-size:11.80px;font-weight:bold;color:#151515;transform:scaleX(1.047);">793</div>
<div class="t" style="left:126.30px;top:719.00px;font-size:11.80px;font-style:italic;color:#151515;transform:scaleX(1.048);">files.</div>
<div class="t" style="left:157.80px;top:719.00px;font-size:11.80px;font-style:italic;color:#151515;transform:scaleX(0.896);">Selected</div>
<div class="t" style="left:202.80px;top:719.00px;font-size:11.80px;font-weight:bold;color:#151515;transform:scaleX(1.023);">2.61 GB</div>
<div class="t" style="left:250.40px;top:719.00px;font-size:11.80px;font-style:italic;color:#151515;transform:scaleX(0.889);">in</div>
<div class="t" style="left:263.20px;top:719.00px;font-size:11.80px;font-weight:bold;color:#151515;transform:scaleX(1.047);">493</div>
<div class="t" style="left:287.00px;top:719.00px;font-size:11.80px;font-style:italic;color:#151515;transform:scaleX(1.017);">files.</div>
<div class="t" style="left:14.80px;top:745.00px;font-size:11.80px;font-style:italic;color:#1c1ce0;transform:scaleX(1.005);text-decoration:underline">Have difficulty with data recovery? Click here for instructions.</div>
<div class="t" style="left:813.20px;top:734.00px;font-size:12.07px;font-style:italic;color:#444;transform:scaleX(0.911);">Back</div>
<div class="t" style="left:938.01px;top:734.00px;font-size:12.07px;font-weight:bold;color:#fff;transform:scaleX(0.993);">Save</div>
<div class="abs" style="left:0;top:0;width:1027px;height:770px;border:1px solid #111;border-right-width:2px;pointer-events:none;z-index:50"></div>
</body></html>
